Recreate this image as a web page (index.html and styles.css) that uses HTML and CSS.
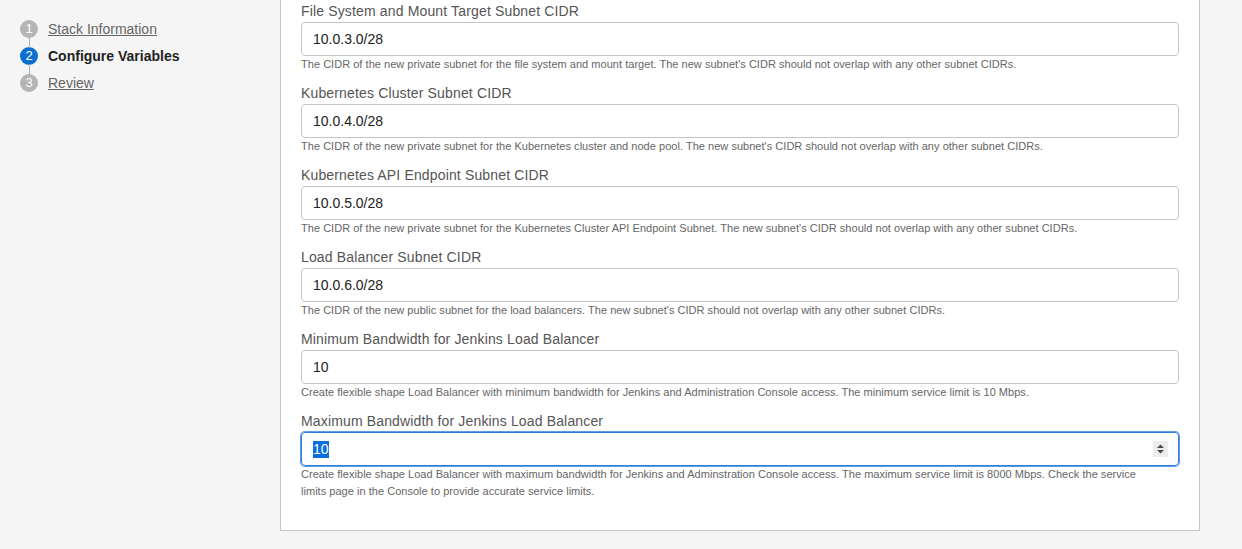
FILE: index.html
```html
<!DOCTYPE html>
<html>
<head>
<meta charset="utf-8">
<link rel="stylesheet" href="styles.css">
</head>
<body>
<div class="page">
  <nav class="steps">
    <div class="step">
      <span class="num done">1</span>
      <a class="step-link">Stack Information</a>
    </div>
    <div class="step">
      <span class="num active">2</span>
      <span class="step-current">Configure Variables</span>
    </div>
    <div class="step">
      <span class="num">3</span>
      <a class="step-link">Review</a>
    </div>
  </nav>
  <main class="panel">
    <div class="field">
      <div class="label">File System and Mount Target Subnet CIDR</div>
      <div class="input">10.0.3.0/28</div>
      <div class="help">The CIDR of the new private subnet for the file system and mount target. The new subnet's CIDR should not overlap with any other subnet CIDRs.</div>
    </div>
    <div class="field">
      <div class="label">Kubernetes Cluster Subnet CIDR</div>
      <div class="input">10.0.4.0/28</div>
      <div class="help">The CIDR of the new private subnet for the Kubernetes cluster and node pool. The new subnet's CIDR should not overlap with any other subnet CIDRs.</div>
    </div>
    <div class="field">
      <div class="label">Kubernetes API Endpoint Subnet CIDR</div>
      <div class="input">10.0.5.0/28</div>
      <div class="help">The CIDR of the new private subnet for the Kubernetes Cluster API Endpoint Subnet. The new subnet's CIDR should not overlap with any other subnet CIDRs.</div>
    </div>
    <div class="field">
      <div class="label">Load Balancer Subnet CIDR</div>
      <div class="input">10.0.6.0/28</div>
      <div class="help">The CIDR of the new public subnet for the load balancers. The new subnet's CIDR should not overlap with any other subnet CIDRs.</div>
    </div>
    <div class="field">
      <div class="label">Minimum Bandwidth for Jenkins Load Balancer</div>
      <div class="input">10</div>
      <div class="help">Create flexible shape Load Balancer with minimum bandwidth for Jenkins and Administration Console access. The minimum service limit is 10 Mbps.</div>
    </div>
    <div class="field">
      <div class="label">Maximum Bandwidth for Jenkins Load Balancer</div>
      <div class="input focused"><span class="selected">10</span>
        <span class="spinner">
          <svg width="15" height="16" viewBox="0 0 15 16"><path d="M7.5 3.5 L11 7 L4 7 Z" fill="#4a4a4a"/><path d="M4 9 L11 9 L7.5 12.5 Z" fill="#4a4a4a"/></svg>
        </span>
      </div>
      <div class="help">Create flexible shape Load Balancer with maximum bandwidth for Jenkins and Adminstration Console access. The maximum service limit is 8000 Mbps. Check the service limits page in the Console to provide accurate service limits.</div>
    </div>
  </main>
</div>
</body>
</html>
```

FILE: styles.css
```css
html, body {
  margin: 0;
  padding: 0;
  background: #f5f5f5;
  font-family: "Liberation Sans", Arial, Helvetica, sans-serif;
  overflow: hidden;
}

.page {
  display: flex;
  align-items: flex-start;
}

.steps {
  width: 280px;
  flex: none;
  box-sizing: border-box;
  padding: 20px 0 0 20px;
  display: flex;
  flex-direction: column;
  gap: 9px;
}

.step {
  display: flex;
  align-items: center;
  height: 18px;
  gap: 10px;
  position: relative;
}

.step + .step::before {
  content: "";
  position: absolute;
  left: 9px;
  top: -10px;
  width: 1px;
  height: 11px;
  background: #b3b3b3;
}

.num {
  width: 18px;
  height: 18px;
  border-radius: 50%;
  background: #b5b5b5;
  color: #fff;
  font-size: 13px;
  line-height: 18px;
  text-align: center;
  flex: none;
}

.num.active {
  background: #0a6fcf;
}

.step-link {
  font-size: 14px;
  color: #666;
  text-decoration: underline;
}

.step-current {
  font-size: 14px;
  font-weight: bold;
  color: #222;
}

.panel {
  width: 920px;
  flex: none;
  box-sizing: border-box;
  background: #fff;
  border: 1px solid #c2c6cc;
  margin-top: -20px;
  padding: 21px 20px 30px 20px;
}

.field {
  margin-bottom: 11px;
}

.field:last-child {
  margin-bottom: 0;
}

.label {
  font-size: 14px;
  line-height: 18px;
  color: #555;
  letter-spacing: 0.15px;
  margin-bottom: 2px;
}

.input {
  height: 34px;
  box-sizing: border-box;
  border: 1px solid #c4c4c4;
  border-radius: 4px;
  padding: 0 11px;
  font-size: 14px;
  line-height: 32px;
  color: #222;
  display: flex;
  align-items: center;
}

.input.focused {
  border: 1px solid #2e7fd2;
  box-shadow: 0 0 0 1px #5d9de2;
}

.selected {
  background: #0a6fe0;
  color: #fff;
  line-height: 17px;
}

.spinner {
  margin-left: auto;
  margin-right: -1px;
  width: 15px;
  height: 16px;
  background: #ececec;
  display: flex;
}

.help {
  font-size: 11px;
  line-height: 17px;
  color: #666;
  letter-spacing: 0.03px;
  max-width: 845px;
}
```
